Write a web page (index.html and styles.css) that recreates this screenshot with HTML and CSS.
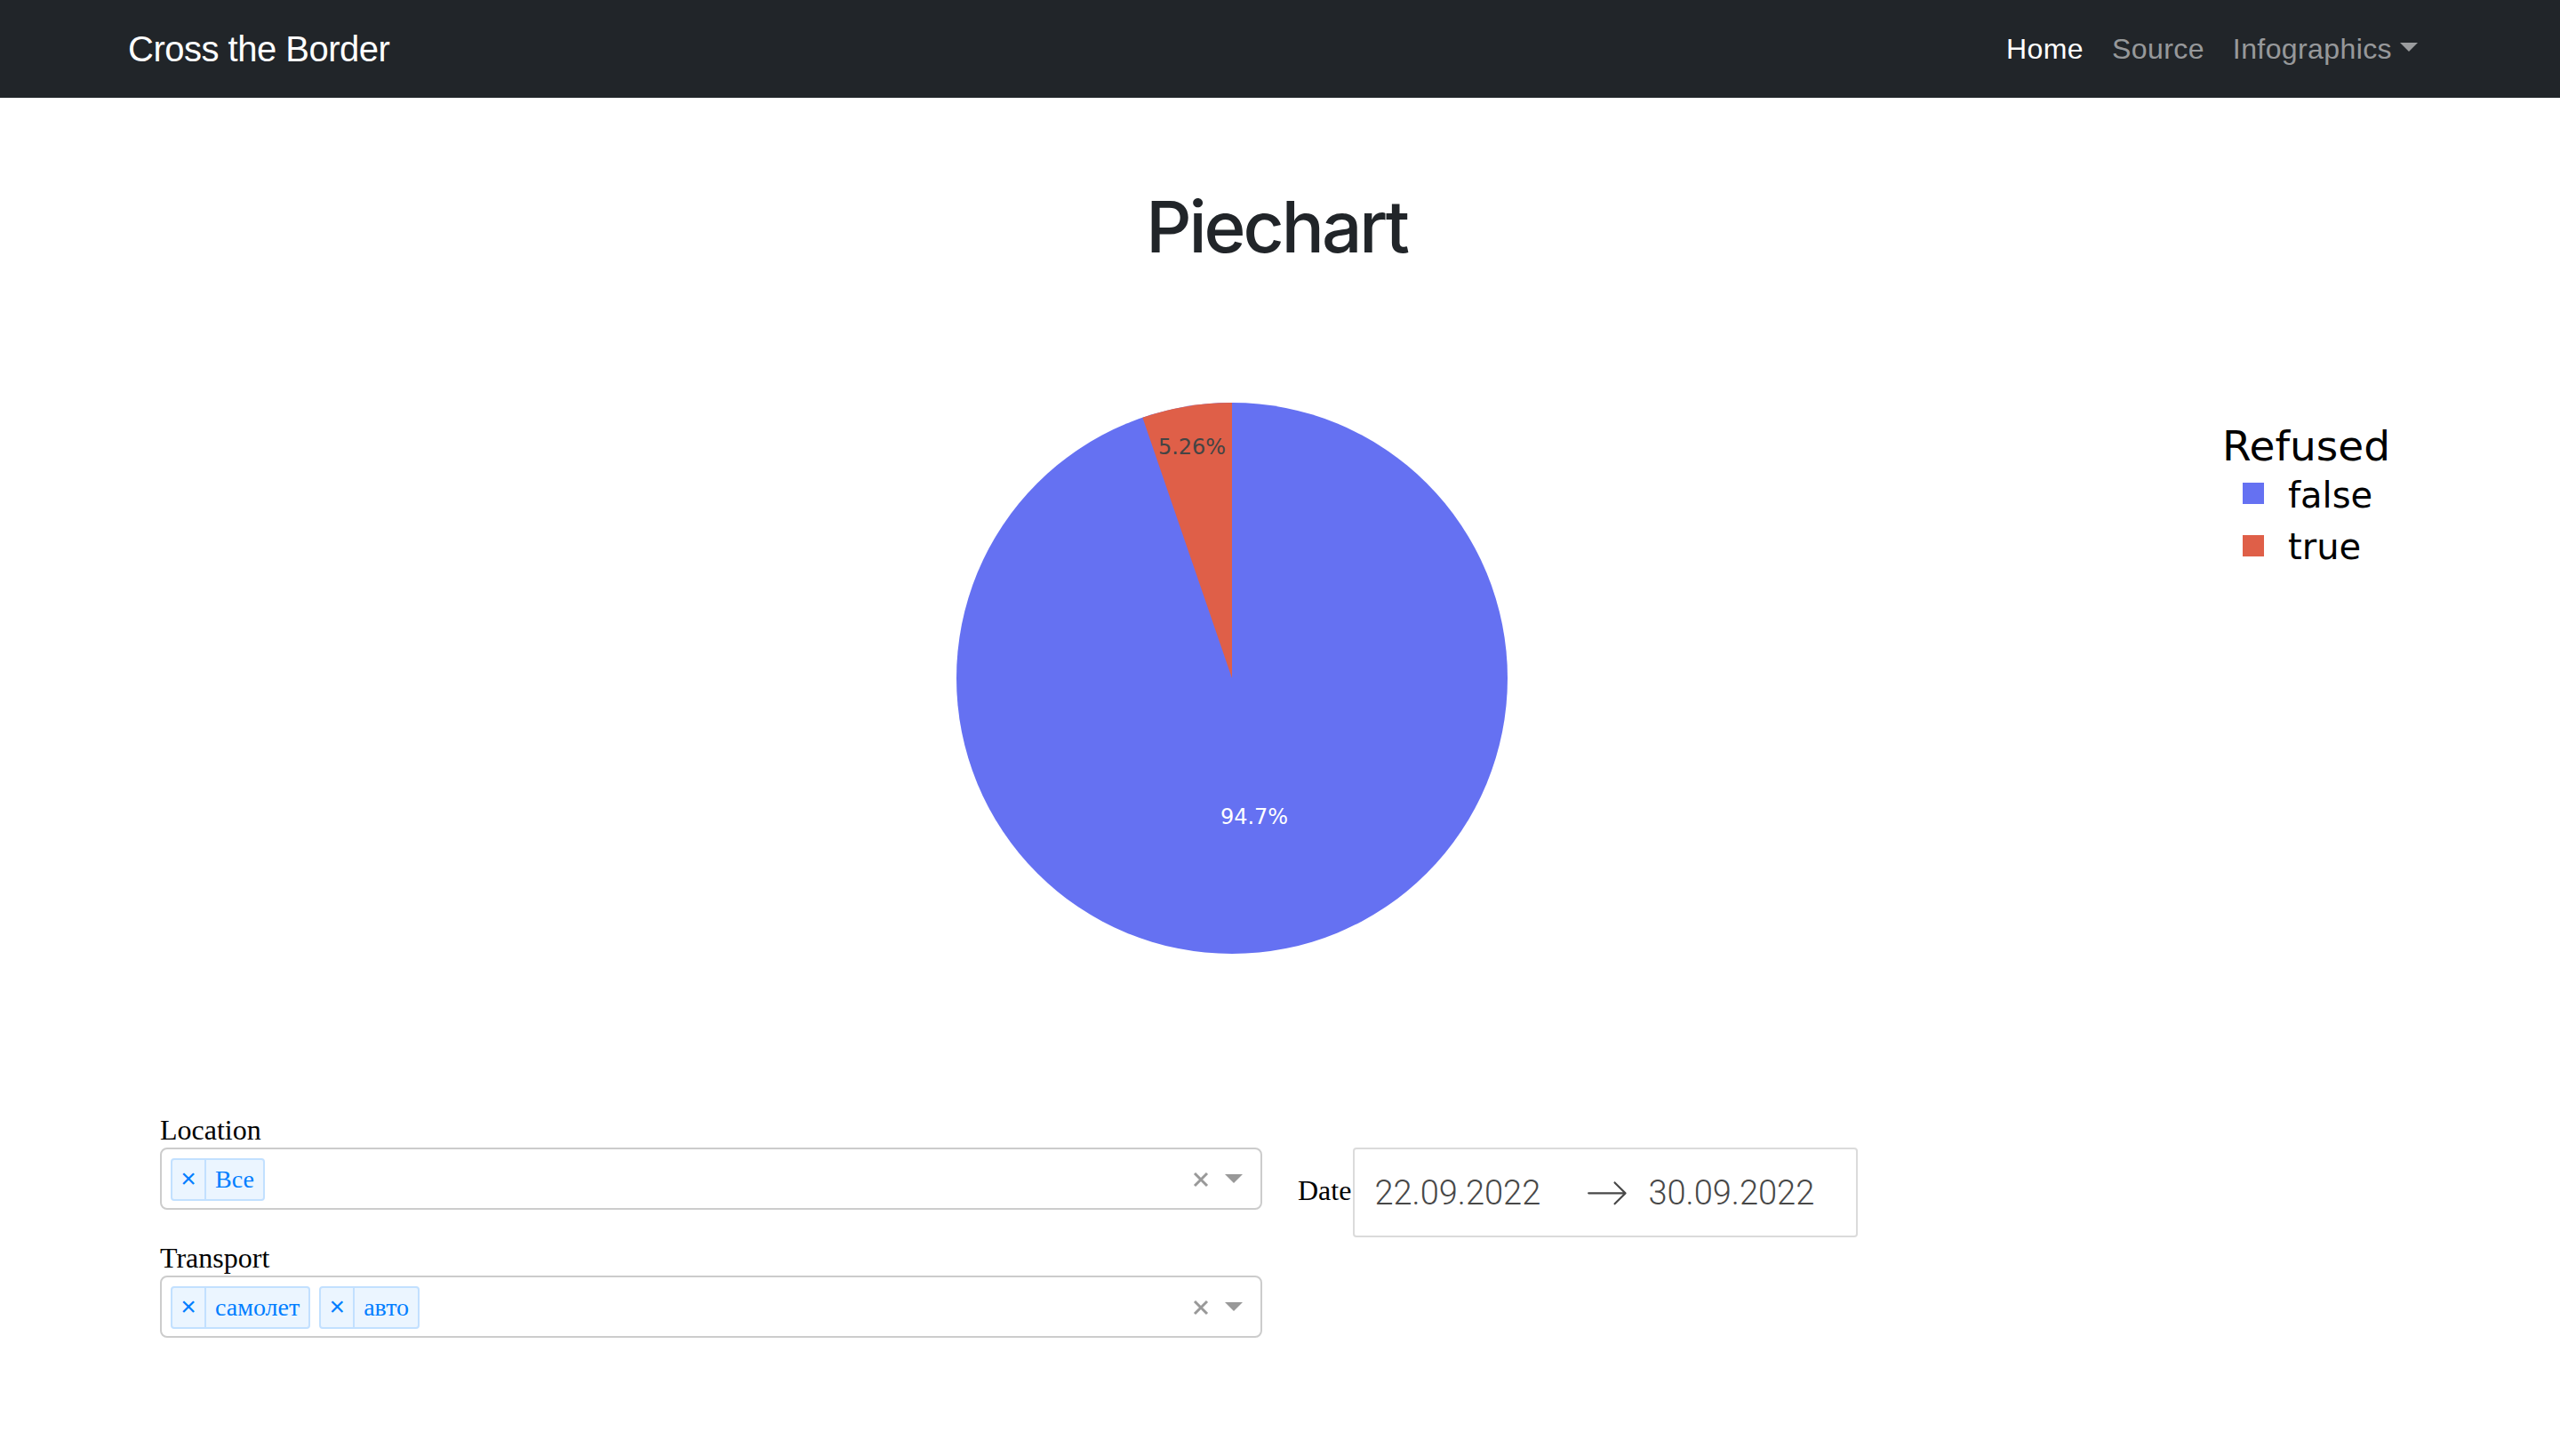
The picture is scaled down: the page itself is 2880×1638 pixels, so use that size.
FILE: index.html
```html
<!DOCTYPE html>
<html lang="ru">
<head>
<meta charset="utf-8">
<title>Cross the Border</title>
<link rel="stylesheet" href="styles.css">
</head>
<body>
<nav class="navbar">
  <div class="nav-inner">
    <a class="brand" href="#">Cross the Border</a>
    <ul class="nav-links">
      <li class="nav-item active">Home</li>
      <li class="nav-item">Source</li>
      <li class="nav-item">Infographics<span class="caret"></span></li>
    </ul>
  </div>
</nav>
<main>
  <h1 class="title">Piechart</h1>
  <div class="chart">
    <svg class="chart-svg" width="2880" height="900" viewBox="0 0 2880 900">
      <circle cx="1386" cy="460" r="310" fill="#6571f2"/>
      <path d="M1386 460 L1386 150 A310 310 0 0 0 1285.4 166.8 Z" fill="#df5f48"/>
      <text class="pie-label dark" x="1341" y="208" text-anchor="middle">5.26%</text>
      <text class="pie-label light" x="1411" y="624" text-anchor="middle">94.7%</text>
      <text class="legend-title" x="2500" y="215">Refused</text>
      <rect x="2523" y="240" width="24" height="24" fill="#6571f2"/>
      <text class="legend-item" x="2574" y="268">false</text>
      <rect x="2523" y="299" width="24" height="24" fill="#df5f48"/>
      <text class="legend-item" x="2574" y="326">true</text>
    </svg>
  </div>
  <section class="filters">
    <div class="col-left">
      <label class="field-label">Location</label>
      <div class="select">
        <div class="values">
          <span class="tag"><span class="tag-icon">×</span><span class="tag-label">Все</span></span>
        </div>
        <span class="clear-zone"><svg width="18" height="18" viewBox="0 0 18 18"><path d="M2 2 L16 16 M16 2 L2 16" stroke="#999" stroke-width="3"/></svg></span>
        <span class="arrow-zone"><span class="arrow"></span></span>
      </div>
      <label class="field-label second">Transport</label>
      <div class="select">
        <div class="values">
          <span class="tag"><span class="tag-icon">×</span><span class="tag-label">самолет</span></span>
          <span class="tag"><span class="tag-icon">×</span><span class="tag-label">авто</span></span>
        </div>
        <span class="clear-zone"><svg width="18" height="18" viewBox="0 0 18 18"><path d="M2 2 L16 16 M16 2 L2 16" stroke="#999" stroke-width="3"/></svg></span>
        <span class="arrow-zone"><span class="arrow"></span></span>
      </div>
    </div>
    <div class="date-field">
      <label class="date-label">Date</label>
      <div class="daterange">
        <div class="date-input">22.09.2022</div>
        <svg class="date-arrow" width="48" height="48" viewBox="0 0 1000 1000"><path fill="#484848" d="M694.4 242.4l249.1 249.1c11 11 11 21 0 32L694.4 772.7c-5 5-10 7-16 7s-11-2-16-7c-11-11-11-21 0-32l210.1-210.1H67.1c-13 0-23-10-23-23s10-23 23-23h805.4L662.4 274.5c-21-21.1 11-53.1 32-32.1z"/></svg>
        <div class="date-input end">30.09.2022</div>
      </div>
    </div>
  </section>
</main>
</body>
</html>
```

FILE: styles.css
```css
html, body {
  margin: 0;
  padding: 0;
  background: #fff;
}

body {
  font-family: "Liberation Serif", "Times New Roman", serif;
  color: #000;
}

.navbar {
  background: #212529;
  height: 110px;
}

.nav-inner {
  height: 110px;
  display: flex;
  align-items: center;
  justify-content: space-between;
  padding: 0 144px;
}

.brand {
  font-family: "Liberation Sans", Arial, sans-serif;
  font-size: 40px;
  line-height: 60px;
  letter-spacing: -0.5px;
  color: #fff;
  text-decoration: none;
}

.nav-links {
  display: flex;
  list-style: none;
  margin: 0;
  padding: 0;
}

.nav-item {
  font-family: "Liberation Sans", Arial, sans-serif;
  font-size: 32px;
  line-height: 48px;
  letter-spacing: 0.4px;
  padding: 16px;
  color: rgba(255, 255, 255, 0.55);
}

.nav-item.active {
  color: #fff;
}

.caret {
  display: inline-block;
  margin-left: 9px;
  vertical-align: 8px;
  border-top: 10px solid;
  border-left: 10px solid transparent;
  border-right: 10px solid transparent;
}

.title {
  font-family: Inter, "Liberation Sans", sans-serif;
  font-weight: 500;
  font-size: 80px;
  line-height: 96px;
  letter-spacing: -3px;
  margin: 97px 0 0;
  padding-right: 8px;
  text-align: center;
  color: #212529;
}

.chart {
  height: 900px;
}

.chart-svg {
  display: block;
}

.pie-label {
  font-family: "DejaVu Sans", Verdana, sans-serif;
  font-size: 24px;
}

.pie-label.dark {
  fill: #444;
}

.pie-label.light {
  fill: #fff;
}

.legend-title {
  font-family: "DejaVu Sans", Verdana, sans-serif;
  font-size: 47px;
  fill: #000;
}

.legend-item {
  font-family: "DejaVu Sans", Verdana, sans-serif;
  font-size: 40px;
  fill: #000;
}

.filters {
  display: flex;
  align-items: flex-start;
  padding-left: 180px;
  margin-top: 48px;
}

.col-left {
  width: 1240px;
}

.field-label {
  display: block;
  font-size: 32px;
  line-height: 40px;
}

.field-label.second {
  margin-top: 34px;
}

.select {
  height: 70px;
  box-sizing: border-box;
  border: 2px solid #ccc;
  border-radius: 8px;
  display: flex;
  align-items: flex-start;
  background: #fff;
}

.values {
  flex: 1;
  display: flex;
}

.tag {
  display: flex;
  margin: 10px 0 0 10px;
  height: 48px;
  box-sizing: border-box;
  border: 2px solid #c2e0ff;
  border-radius: 4px;
  background: #ebf5ff;
  color: #007eff;
  font-size: 28px;
}

.tag-icon {
  display: flex;
  align-items: center;
  padding: 0 10px 3px;
  font-family: "Liberation Sans", Arial, sans-serif;
  font-size: 30px;
  width: 16px;
  justify-content: center;
}

.tag-label {
  display: flex;
  align-items: center;
  padding: 0 10px;
  border-left: 2px solid #c2e0ff;
}

.clear-zone {
  align-self: center;
  width: 34px;
  display: flex;
  justify-content: center;
  padding-top: 2px;
}

.clear-zone svg {
  display: block;
}

.arrow-zone {
  align-self: center;
  width: 40px;
  padding-right: 10px;
  display: flex;
  justify-content: center;
}

.arrow {
  display: block;
  border-top: 10px solid #999;
  border-left: 10px solid transparent;
  border-right: 10px solid transparent;
}

.date-field {
  display: flex;
  align-items: center;
  margin-left: 40px;
  margin-top: 40px;
}

.date-label {
  font-size: 32px;
  line-height: 40px;
  padding-bottom: 6px;
}

.daterange {
  display: flex;
  align-items: center;
  height: 101px;
  box-sizing: border-box;
  border: 2px solid #dbdbdb;
  border-radius: 4px;
  margin-left: 2px;
}

.date-input {
  width: 260px;
  box-sizing: border-box;
  padding-left: 22px;
  font-family: Roboto, "Liberation Sans", sans-serif;
  font-weight: 300;
  font-size: 38px;
  color: #484848;
}

.date-input.end {
  width: 256px;
}

.date-arrow {
  display: block;
}
```
